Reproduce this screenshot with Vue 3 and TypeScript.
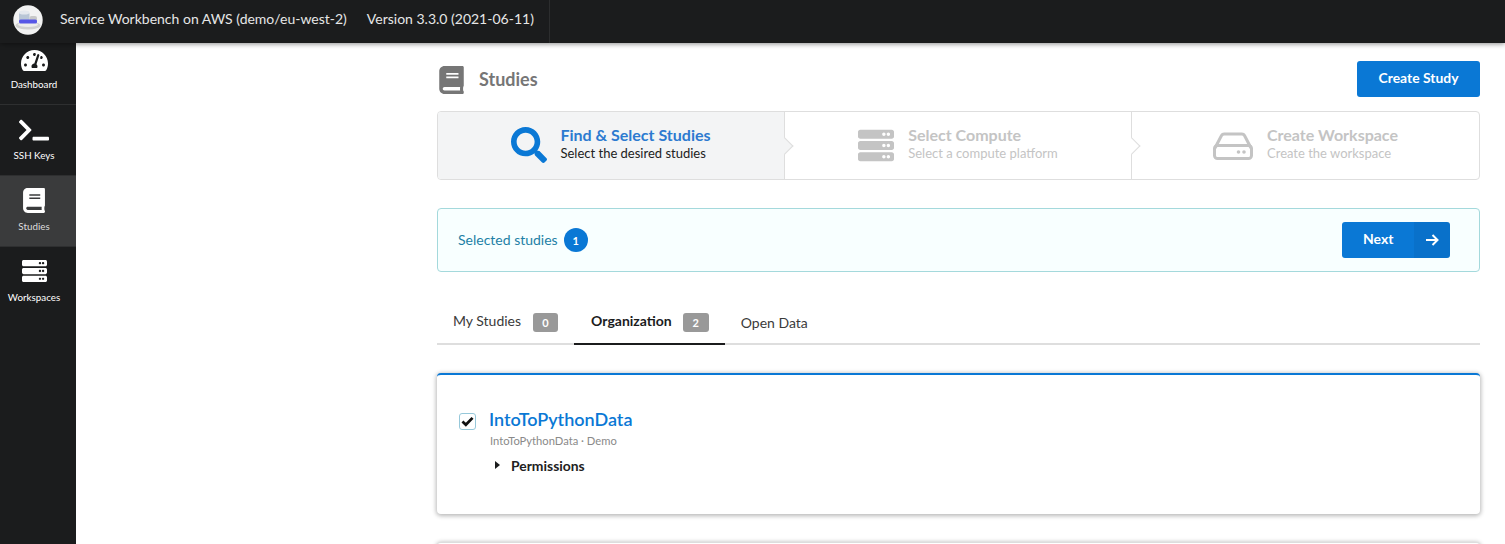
<script setup lang="ts">
const searchPath = 'M505 442.7L405.3 343c-4.5-4.5-10.6-7-17-7H372c27.6-35.3 44-79.7 44-128C416 93.1 322.9 0 208 0S0 93.1 0 208s93.1 208 208 208c48.3 0 92.7-16.4 128-44v16.3c0 6.4 2.5 12.5 7 17l99.7 99.7c9.4 9.4 24.6 9.4 33.9 0l28.3-28.3c9.4-9.4 9.4-24.6.1-34zM208 336c-70.7 0-128-57.2-128-128 0-70.7 57.2-128 128-128 70.7 0 128 57.2 128 128 0 70.7-57.2 128-128 128z'
const bookPath = 'M448 360V24c0-13.3-10.7-24-24-24H96C43 0 0 43 0 96v320c0 53 43 96 96 96h328c13.3 0 24-10.7 24-24v-16c0-7.5-3.5-14.3-8.9-18.7-4.2-15.4-4.2-59.3 0-74.7 5.4-4.3 8.9-11.1 8.9-18.6zM128 134c0-3.3 2.7-6 6-6h212c3.3 0 6 2.7 6 6v20c0 3.3-2.7 6-6 6H134c-3.3 0-6-2.7-6-6v-20zm0 64c0-3.3 2.7-6 6-6h212c3.3 0 6 2.7 6 6v20c0 3.3-2.7 6-6 6H134c-3.3 0-6-2.7-6-6v-20zm253.4 250H96c-17.7 0-32-14.3-32-32 0-17.6 14.4-32 32-32h285.4c-1.9 17.1-1.9 46.9 0 64z'
const serverPath = 'M480 160H32c-17.673 0-32-14.327-32-32V64c0-17.673 14.327-32 32-32h448c17.673 0 32 14.327 32 32v64c0 17.673-14.327 32-32 32zm-48-88c-13.255 0-24 10.745-24 24s10.745 24 24 24 24-10.745 24-24-10.745-24-24-24zm-64 0c-13.255 0-24 10.745-24 24s10.745 24 24 24 24-10.745 24-24-10.745-24-24-24zm112 248H32c-17.673 0-32-14.327-32-32v-64c0-17.673 14.327-32 32-32h448c17.673 0 32 14.327 32 32v64c0 17.673-14.327 32-32 32zm-48-88c-13.255 0-24 10.745-24 24s10.745 24 24 24 24-10.745 24-24-10.745-24-24-24zm-64 0c-13.255 0-24 10.745-24 24s10.745 24 24 24 24-10.745 24-24-10.745-24-24-24zm112 248H32c-17.673 0-32-14.327-32-32v-64c0-17.673 14.327-32 32-32h448c17.673 0 32 14.327 32 32v64c0 17.673-14.327 32-32 32zm-48-88c-13.255 0-24 10.745-24 24s10.745 24 24 24 24-10.745 24-24-10.745-24-24-24zm-64 0c-13.255 0-24 10.745-24 24s10.745 24 24 24 24-10.745 24-24-10.745-24-24-24z'
const gaugePath = 'M288 32C128.94 32 0 160.94 0 320c0 52.8 14.25 102.26 39.06 144.8 5.61 9.62 16.3 15.2 27.44 15.2h443c11.14 0 21.83-5.58 27.44-15.2C561.75 422.26 576 372.8 576 320c0-159.06-128.94-288-288-288zm0 64c14.71 0 26.58 10.13 30.32 23.65-1.11 2.26-2.64 4.23-3.45 6.67l-9.22 27.67c-5.13 3.49-10.97 6.01-17.64 6.01-17.67 0-32-14.33-32-32S270.33 96 288 96zM96 384c-17.67 0-32-14.33-32-32s14.33-32 32-32 32 14.33 32 32-14.33 32-32 32zm48-160c-17.67 0-32-14.33-32-32s14.33-32 32-32 32 14.33 32 32-14.33 32-32 32zm246.77-72.41l-61.33 184C343.13 347.33 352 364.54 352 384c0 11.72-3.38 22.55-8.88 32H232.88c-5.5-9.45-8.88-20.28-8.88-32 0-33.94 26.5-61.43 59.9-63.59l61.34-184.01c4.17-12.56 17.73-19.45 30.36-15.17 12.57 4.19 19.35 17.76 15.17 30.36zm14.66 57.2l15.52-46.55c3.47-1.29 7.13-2.23 11.05-2.23 17.67 0 32 14.33 32 32s-14.33 32-32 32c-11.38-.01-20.89-6.28-26.57-15.22zM480 384c-17.67 0-32-14.33-32-32s14.33-32 32-32 32 14.33 32 32-14.33 32-32 32z'
const terminalPath = 'M257.981 272.971L63.638 467.314c-9.373 9.373-24.569 9.373-33.941 0L7.029 444.647c-9.357-9.357-9.375-24.522-.04-33.901L161.011 256 6.99 101.255c-9.335-9.379-9.317-24.544.04-33.901l22.667-22.667c9.373-9.373 24.569-9.373 33.941 0L257.981 239.03c9.373 9.372 9.373 24.568 0 33.941zM640 456v-32c0-13.255-10.745-24-24-24H312c-13.255 0-24 10.745-24 24v32c0 13.255 10.745 24 24 24h304c13.255 0 24-10.745 24-24z'
</script>

<template>
  <div class="page">
    <header class="topbar">
      <div class="brand">
        <svg class="logo" viewBox="0 0 30 30" aria-hidden="true">
          <circle cx="15" cy="15" r="14.7" fill="#f2f2f2" />
          <ellipse cx="15" cy="20.5" rx="12.5" ry="4" fill="#d0d0d0" />
          <ellipse cx="15" cy="19.5" rx="10" ry="2.4" fill="#ececec" />
          <rect x="6" y="6.5" width="10.5" height="11" rx="3" fill="#b9c6d6" />
          <ellipse cx="11.2" cy="7.5" rx="5.2" ry="2" fill="#e4e8ee" />
          <rect x="16.5" y="11" width="7.5" height="7" rx="2" fill="#c8c8c8" />
          <rect x="6" y="14.5" width="18" height="4" rx="1.6" fill="#5656e6" />
        </svg>
        <span class="brand-name">Service Workbench on AWS (demo/eu-west-2)</span>
        <span class="brand-version">Version 3.3.0 (2021-06-11)</span>
      </div>
    </header>

    <div class="body">
      <nav class="sidebar">
        <a class="nav-item nav-first">
          <svg class="gauge" viewBox="0 32 576 448"><path :d="gaugePath" /></svg>
          <span>Dashboard</span>
        </a>
        <a class="nav-item">
          <svg class="terminal" viewBox="0 32 640 448"><path :d="terminalPath" /></svg>
          <span>SSH Keys</span>
        </a>
        <a class="nav-item active">
          <svg class="book" viewBox="0 0 448 512"><path :d="bookPath" /></svg>
          <span>Studies</span>
        </a>
        <a class="nav-item">
          <svg class="server" viewBox="0 32 512 448"><path :d="serverPath" /></svg>
          <span>Workspaces</span>
        </a>
      </nav>

      <main class="main">
        <div class="page-head">
          <div class="page-title">
            <svg class="title-icon" viewBox="0 0 448 512"><path :d="bookPath" /></svg>
            <h1>Studies</h1>
          </div>
          <button class="btn btn-create">Create Study</button>
        </div>

        <div class="steps">
          <div class="step step-active">
            <svg class="step-icon search" viewBox="0 0 512 512"><path :d="searchPath" /></svg>
            <div class="step-text">
              <div class="step-title">Find &amp; Select Studies</div>
              <div class="step-desc">Select the desired studies</div>
            </div>
            <i class="chevron chevron-active"></i>
          </div>
          <div class="step">
            <svg class="step-icon compute" viewBox="0 32 512 448"><path :d="serverPath" /></svg>
            <div class="step-text">
              <div class="step-title">Select Compute</div>
              <div class="step-desc">Select a compute platform</div>
            </div>
            <i class="chevron"></i>
          </div>
          <div class="step">
            <svg class="step-icon hdd" viewBox="0 0 40 28" fill="none">
              <path d="M2 16 L8.5 3.5 a3 3 0 0 1 2.6-1.5 H28.9 a3 3 0 0 1 2.6 1.5 L38 16" stroke="#c4c4c4" stroke-width="3" />
              <rect x="1.5" y="13.5" width="37" height="13" rx="3" stroke="#c4c4c4" stroke-width="3" />
              <circle cx="25.5" cy="20" r="1.8" fill="#c4c4c4" />
              <circle cx="31" cy="20" r="1.8" fill="#c4c4c4" />
            </svg>
            <div class="step-text">
              <div class="step-title">Create Workspace</div>
              <div class="step-desc">Create the workspace</div>
            </div>
          </div>
        </div>

        <div class="selected">
          <div class="selected-label">
            <span class="selected-text">Selected studies</span>
            <span class="count">1</span>
          </div>
          <button class="btn btn-next">
            <span class="next-text">Next</span>
            <span class="next-icon">
              <svg viewBox="0 0 14 14" fill="none" stroke="#fff" stroke-width="2">
                <path d="M1 7 H12.5 M7.5 2 L12.5 7 L7.5 12" />
              </svg>
            </span>
          </button>
        </div>

        <div class="tabs">
          <a class="tab">My Studies <span class="badge">0</span></a>
          <a class="tab tab-on">Organization <span class="badge">2</span></a>
          <a class="tab tab-plain">Open Data</a>
        </div>

        <section class="card">
          <div class="check">
            <svg viewBox="0 0 14 12" fill="none" stroke="#111" stroke-width="3">
              <path d="M1.5 6 L5.2 9.6 L12.5 2" />
            </svg>
          </div>
          <div class="card-body">
            <div class="card-title">IntoToPythonData</div>
            <div class="card-sub">IntoToPythonData · Demo</div>
            <div class="perm"><i class="caret"></i>Permissions</div>
          </div>
        </section>
        <section class="card card-next"></section>
      </main>
    </div>
  </div>
</template>

<style>
html, body { margin: 0; height: 100%; overflow: hidden; background: #fff; }
</style>

<style scoped>
.page {
  width: 1505px;
  height: 544px;
  display: flex;
  flex-direction: column;
  overflow: hidden;
  font-family: Lato, "Liberation Sans", sans-serif;
  font-size: 14px;
  color: #212121;
}
.topbar {
  flex: 0 0 43px;
  background: #1b1c1d;
  box-shadow: 0 1px 5px rgba(0, 0, 0, .45);
  position: relative;
  z-index: 2;
  display: flex;
}
.brand {
  display: flex;
  align-items: center;
  padding: 0 15px 7px 13px;
  border-right: 1px solid #2c2d2e;
  color: #e6e6e6;
  font-size: 14px;
}
.logo { width: 30px; height: 30px; margin-right: 17px; margin-top: 3px; }
.brand-name { margin-right: 20px; }
.body { flex: 1; display: flex; min-height: 0; }
.sidebar {
  flex: 0 0 76px;
  box-sizing: border-box;
  padding-right: 8px;
  background: #1b1c1d;
  display: flex;
  flex-direction: column;
  color: #fff;
}
.nav-item {
  flex: none;
  margin-right: -8px;
  padding-right: 8px;
  border-bottom: 1px solid #2e2f30;
  display: flex;
  flex-direction: column;
  align-items: center;
  justify-content: flex-end;
  padding-bottom: 13px;
  font-size: 9.8px;
  line-height: 14px;
  height: 57px;
}
.nav-item svg { fill: #fff; display: block; }
.nav-first { height: 48px; }
.nav-item:last-child { border-bottom: 0; }
.nav-item.active { background: #3a3b3c; color: #ddd; }
.gauge { width: 27px; height: 21px; margin-bottom: 6px; }
.terminal { width: 30px; height: 22px; margin-bottom: 7px; }
.book { width: 22px; height: 25px; margin-bottom: 6px; }
.server { width: 25px; height: 22px; margin-bottom: 8px; }

.main {
  flex: 1;
  min-width: 0;
  padding: 18px 25px 0 361px;
}
.page-head {
  display: flex;
  align-items: center;
  justify-content: space-between;
  height: 36px;
}
.page-title { display: flex; align-items: center; color: #767676; }
.title-icon { width: 25px; height: 28px; fill: #767676; margin: 2px 15px 0 2px; }
h1 { margin: 0; font-size: 18px; font-weight: 700; line-height: 24px; margin-top: -1px; }
.btn {
  border: 0;
  background: #0a78d5;
  color: #fff;
  font-family: inherit;
  font-weight: 700;
  font-size: 14px;
  border-radius: 3px;
  padding: 0;
}
.btn-create { width: 123px; height: 36px; padding-bottom: 3px; font-size: 13.9px; }

.steps {
  margin-top: 14px;
  height: 69px;
  box-sizing: border-box;
  border: 1px solid #dedede;
  border-radius: 4px;
  display: grid;
  grid-template-columns: 347px 347px 1fr;
}
.step {
  position: relative;
  display: flex;
  align-items: center;
  justify-content: center;
  border-right: 1px solid #dedede;
  color: #c4c4c4;
}
.step:last-child { border-right: 0; }
.step-active { background: #f3f4f5; border-radius: 3px 0 0 3px; color: #212121; }
.step-icon { flex: none; }
.step-text { margin-top: -4px; }
.search { width: 36px; height: 36px; fill: #0a78d5; margin: -2px 13px 0 0; }
.compute { width: 36px; height: 33px; fill: #c4c4c4; margin: -1px 14px 0 0; }
.hdd { width: 40px; height: 28px; margin: 0 14px 0 0; }
.step-title { font-size: 16px; font-weight: 700; line-height: 19px; color: #c4c4c4; margin-top: -1px; margin-bottom: 1px; }
.step-desc { font-size: 13px; line-height: 17px; color: #c4c4c4; }
.step-active .step-title { color: #2c7ad0; }
.step-active .step-desc { color: #212121; }
.chevron {
  position: absolute;
  right: -7px;
  top: 50%;
  width: 11px;
  height: 11px;
  margin-top: -6px;
  background: #fff;
  border-top: 1px solid #dedede;
  border-right: 1px solid #dedede;
  transform: rotate(45deg);
  z-index: 1;
}
.chevron-active { background: #f3f4f5; }

.selected {
  margin-top: 28px;
  height: 64px;
  box-sizing: border-box;
  border: 1px solid #a4d9dc;
  border-radius: 4px;
  background: #f8ffff;
  display: flex;
  align-items: center;
  justify-content: space-between;
  padding: 0 29px 0 20px;
}
.selected-label { display: flex; align-items: center; color: #1d7fa6; font-size: 14px; }
.selected-text { margin-top: -2px; }
.count {
  width: 24px;
  height: 24px;
  border-radius: 50%;
  margin-left: 6px;
  background: #0a78d5;
  color: #fff;
  font-size: 11px;
  font-weight: 700;
  display: flex;
  align-items: center;
  justify-content: center;
}
.btn-next { width: 108px; height: 36px; display: flex; overflow: hidden; }
.next-text { flex: 1; line-height: 34px; text-align: left; padding-left: 21px; }
.next-icon {
  width: 36px;
  background: rgba(0, 0, 0, .05);
  display: flex;
  align-items: center;
  justify-content: center;
}
.next-icon svg { width: 14px; height: 14px; }

.tabs {
  margin-top: 27px;
  height: 46px;
  box-sizing: border-box;
  border-bottom: 2px solid #dedede;
  display: flex;
}
.tab {
  height: 46px;
  box-sizing: border-box;
  padding: 12px 16px 0;
  border-bottom: 2px solid transparent;
  display: flex;
  align-items: flex-start;
  line-height: 20px;
  color: #3a3a3a;
  font-size: 14px;
}
.tab-on { border-bottom-color: #1b1c1d; color: #1b1c1d; font-weight: 700; padding: 12px 16px 0 17px; }
.tab-plain { padding-top: 14px; }
.badge {
  width: 25px;
  height: 19px;
  margin-left: 12px;
  margin-top: 2px;
  background: #999;
  color: #fff;
  border-radius: 3px;
  font-size: 11px;
  font-weight: 700;
  line-height: 19px;
  text-align: center;
}
.tab-on .badge { width: 26px; margin-left: 11px; }

.card {
  margin-top: 28px;
  height: 141px;
  box-sizing: border-box;
  background: #fff;
  border-top: 2px solid #0a78d5;
  border-radius: 4px;
  box-shadow: 0 1px 4px 1px rgba(0, 0, 0, .28);
  display: flex;
  padding: 38px 22px 0;
}
.check {
  width: 17px;
  height: 17px;
  box-sizing: border-box;
  border: 1px solid #96c8da;
  border-radius: 3px;
  display: flex;
  align-items: center;
  justify-content: center;
  flex: none;
  margin-right: 13px;
}
.check svg { width: 13px; height: 11px; }
.card-body { margin-top: -6px; }
.card-title { font-size: 18px; line-height: 24px; color: #0a78d5; font-weight: 600; }
.card-sub { font-size: 11.2px; line-height: 14px; color: #8a8a8a; margin-top: 3px; padding-left: 1px; }
.perm { font-size: 13.9px; font-weight: 700; line-height: 18px; margin-top: 9px; padding-left: 22px; position: relative; color: #212121; }
.caret {
  position: absolute;
  left: 6px;
  top: 4px;
  width: 0;
  height: 0;
  border-left: 5px solid #1b1c1d;
  border-top: 4.5px solid transparent;
  border-bottom: 4.5px solid transparent;
}
.card-next { border-top: 1px solid #ddd; margin-top: 28px; }
</style>
